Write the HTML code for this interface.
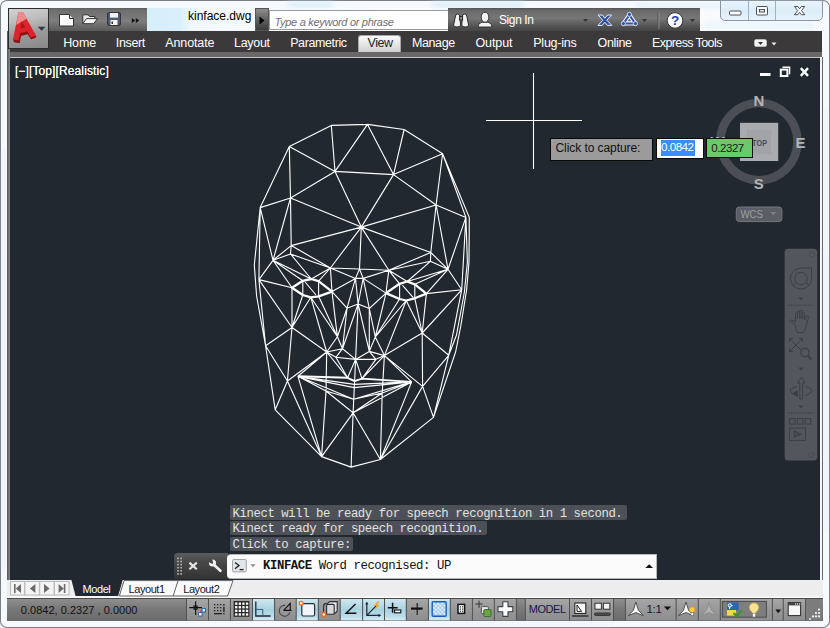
<!DOCTYPE html>
<html>
<head>
<meta charset="utf-8">
<title>kinface.dwg</title>
<style>
*{box-sizing:border-box;margin:0;padding:0}
html,body{width:830px;height:628px;overflow:hidden;background:#f4f8fc;font-family:"Liberation Sans",sans-serif;}
#win{position:absolute;left:0;top:0;width:830px;height:628px;background:#f6f9fd;overflow:hidden;border-radius:7px 7px 7px 7px;box-shadow:inset 0 0 0 1px #7c7f84}
.abs{position:absolute}
svg{position:absolute;overflow:visible}
/* title row */
#titlebg{left:8px;top:8px;width:814px;height:24px;background:linear-gradient(90deg,#f4f9fd 0,#d7eefb 139px,#d9effb 172px,#f1f8fd 184px,#f7fbfe 250px,#fff 620px,#f8fbfe 700px,#f6fafd 814px)}
.blot{position:absolute;background:#d3ebf9;filter:blur(2.5px);opacity:.8}
#qat{left:48px;top:8px;width:98.6px;height:22.6px;background:linear-gradient(#5e5e5e,#6e6e6e 10%,#7e7e7e 55%,#686868 82%,#5a5a5a);}
#appbtn{left:8px;top:8px;width:41px;height:41px;border:1px solid #2c2c2c;background:linear-gradient(170deg,#d2d2d2,#bdbdbd 30%,#9a9a9a 60%,#8a8a8a);}
#title{left:188px;top:9px;font-size:12px;color:#000;white-space:nowrap}
#searcharrow{left:255px;top:8px;width:14px;height:23px;background:linear-gradient(#8c8c8c,#6a6a6a 40%,#3c3c3c);border:1px solid #555}
#search{left:269px;top:10px;width:180px;height:20px;background:#fff;border:1px solid #9a9a9a;border-right:none;font-style:italic;font-size:11px;letter-spacing:-0.3px;color:#707070;padding:4.5px 0 0 4.5px;white-space:nowrap}
#info{left:448px;top:8px;width:252px;height:23px;background:linear-gradient(#555,#6a6a6a 12%,#767676 45%,#4e4e4e 85%,#444)}
#signin{left:499px;top:12.8px;font-size:12px;letter-spacing:-0.4px;color:#fff;white-space:nowrap}
#wctl{left:720px;top:0px;width:103px;height:21px;border:1px solid #8b97a3;border-radius:0 0 5px 5px;background:linear-gradient(#eaf4fc,#dcedf9 50%,#e6f2fb)}
#wctl i{position:absolute;top:0;width:1px;height:19px;background:#9fb0bf}
#tabs{left:8px;top:31px;width:814px;height:22px;background:#3b3939}
#strip{left:8px;top:52.3px;width:814px;height:6px;background:#696969;border-bottom:1px solid #c4c4c4}
.tab{position:absolute;top:36px;font-size:12.5px;color:#fff;white-space:nowrap}
#viewtab{left:357.5px;top:34.5px;width:43.5px;height:17.5px;background:linear-gradient(#fafafa,#e2e2e2 60%,#cfcfcf);border:1px solid #a8a8a8;border-bottom:none;border-radius:3px 3px 0 0}
/* drawing */
#frameL{left:7px;top:31px;width:3px;height:549px;background:linear-gradient(90deg,#555,#8a8a8a)}
#frameR{left:819.6px;top:57px;width:3.6px;height:523px;background:linear-gradient(90deg,#f6f6f6 0,#f6f6f6 72%,#6a6a6a 72%)}
#draw{left:10px;top:57.8px;width:809.6px;height:521.8px;background:#212830;overflow:hidden}
#vplabel{left:4.9px;top:6.2px;font-size:12px;letter-spacing:0.12px;color:#fff;white-space:nowrap;text-shadow:0 0 0.6px #fff}
/* bottom */
#laybar{left:7px;top:579.5px;width:815.6px;height:19px;background:#ededed;border-bottom:1px solid #4a4a4a;box-shadow:inset 0 -1.5px 0 #fcfcfc}
.ltab{z-index:3;top:582.6px;font-size:11px;color:#14142e;letter-spacing:-0.42px;white-space:nowrap}
#status{left:7px;top:598.5px;width:815.6px;height:22px;background:linear-gradient(#8e8e8e,#7a7a7a 40%,#6a6a6a)}
.cmdhist{position:absolute;left:220px;height:14.4px;background:#4d5157;color:#e2e2e2;font-family:"Liberation Mono",monospace;font-size:12.3px;letter-spacing:-0.42px;line-height:14.4px;padding:1.5px 0 0 2.6px;white-space:pre;border-radius:2px;overflow:hidden}
</style>
</head>
<body>
<div id="win">
  <div id="titlebg" class="abs"></div>
  <div class="blot" style="left:288px;top:2px;width:46px;height:5px"></div><div class="blot" style="left:432px;top:2px;width:92px;height:5px"></div><div class="blot" style="left:636px;top:3px;width:100px;height:5px;opacity:.5"></div><div class="blot" style="left:704px;top:22px;width:110px;height:8px;opacity:.35"></div>
  <div class="blot" style="left:825px;top:110px;width:3px;height:420px;opacity:.35"></div><div class="blot" style="left:2px;top:150px;width:3px;height:420px;opacity:.3"></div><div class="blot" style="left:380px;top:623px;width:230px;height:3px;opacity:.4"></div>
  <div id="tabs" class="abs"></div>
  <div id="strip" class="abs"></div>
  <div id="frameL" class="abs"></div>
  <div id="frameR" class="abs"></div>
  <div id="qat" class="abs"></div>
  <div id="appbtn" class="abs"></div>
  <div id="title" class="abs">kinface.dwg</div>
  <div id="searcharrow" class="abs"></div>
  <div id="search" class="abs">Type a keyword or phrase</div>
  <div id="info" class="abs"></div>
  <div id="signin" class="abs">Sign In</div>
  <div id="wctl" class="abs"><i style="left:27px"></i><i style="left:54px"></i></div>
  <div id="viewtab" class="abs"></div>
  <span class="tab" style="left:63.2px;letter-spacing:-0.14px">Home</span>
  <span class="tab" style="left:115.8px;letter-spacing:-0.36px">Insert</span>
  <span class="tab" style="left:165.3px;letter-spacing:-0.13px">Annotate</span>
  <span class="tab" style="left:234px;letter-spacing:-0.29px">Layout</span>
  <span class="tab" style="left:290.2px;letter-spacing:-0.4px">Parametric</span>
  <span class="tab" style="left:367.6px;letter-spacing:-0.44px;color:#1e1e1e">View</span>
  <span class="tab" style="left:412px;letter-spacing:-0.4px">Manage</span>
  <span class="tab" style="left:475.4px;letter-spacing:-0.07px">Output</span>
  <span class="tab" style="left:533.3px;letter-spacing:-0.26px">Plug-ins</span>
  <span class="tab" style="left:597.6px;letter-spacing:-0.36px">Online</span>
  <span class="tab" style="left:652px;letter-spacing:-0.6px">Express Tools</span>
  <svg id="topicons" width="830" height="58" viewBox="0 0 830 58" style="left:0;top:0">
    <!-- app logo A -->
    <g>
      <path d="M13 39.6 L14 42.2 L19.6 43.2 L21 36 L27.6 34.2 L31 39.6 L36.4 37.2 L36 35.5 L27 30 L19 32 Z" fill="#8c1216"/>
      <path d="M18.5 12 L22.8 12 L36 35.5 L30.5 37.5 L27.5 31.5 L20 33 L18.5 40.5 L13 39.5 Z" fill="#df232a"/>
      <path d="M18.5 12 L22.8 12 L26.6 18.8 L16.2 25 Z" fill="#f08a8c"/>
      <path d="M21.6 21.2 L25.6 27.6 L20.6 28.6 Z" fill="#a8181d"/>
      <path d="M37.8 26.7 H45.4 L41.6 30.7 Z" fill="#2f363f"/>
    </g>
    <!-- new -->
    <path d="M59.5 14.5 H69.5 L73.5 18.5 V26 H59.5 Z" fill="#fbfbfb" stroke="#333" stroke-width="1"/>
    <path d="M69.5 14.5 V18.5 H73.5" fill="#ddd" stroke="#333" stroke-width="1"/>
    <!-- open -->
    <path d="M82.8 23.5 V14.8 H88 L89.5 16.5 H94.8 V18.5" fill="#e8e8e8" stroke="#333" stroke-width="1"/>
    <path d="M82.8 23.7 L86.5 18.6 H97.6 L93.6 23.7 Z" fill="#f4f4f4" stroke="#333" stroke-width="1"/>
    <!-- save -->
    <rect x="107.6" y="12.6" width="12.8" height="12.8" rx="1.2" fill="#4d5a73" stroke="#2b2f3a" stroke-width="1"/>
    <rect x="110" y="13" width="8" height="4.6" fill="#f2f2f2"/>
    <rect x="110.5" y="20" width="7" height="5" fill="#f4f4f4"/>
    <rect x="111.5" y="21.5" width="1.5" height="2.5" fill="#333"/>
    <!-- >> -->
    <path d="M131.8 18 L135.2 20.5 L131.8 23 Z M135.8 18 L139.2 20.5 L135.8 23 Z" fill="#111"/>
    <!-- search arrow -->
    <path d="M259.5 16.5 L264.5 20.5 L259.5 24.5 Z" fill="#000"/>
    <!-- binoculars -->
    <g fill="#f2f2f2" stroke="#2a2a2a" stroke-width="1">
      <path d="M455.5 16 Q455.5 14 457.5 14 Q459.5 14 459.8 16 L460.6 25 Q460.5 27 457 27 Q453.6 27 453.6 25 Z"/>
      <path d="M462.4 16 Q462.6 14 464.6 14 Q466.6 14 466.8 16 L468.6 25 Q468.6 27 465.2 27 Q461.8 27 461.8 25 Z"/>
      <rect x="459.6" y="16.5" width="3" height="3.5" fill="#888"/>
    </g>
    <!-- person -->
    <g fill="#f4f4f4" stroke="#2a2a2a" stroke-width="0.9">
      <path d="M478 27 Q478 23 482 22.2 L488 22.2 Q492 23 492 27 Z"/>
      <ellipse cx="485" cy="17.2" rx="3.8" ry="5"/>
    </g>
    <!-- small arrows -->
    <path d="M583 19 H588 L585.5 22 Z" fill="#333"/>
    <path d="M642 19 H647 L644.5 22 Z" fill="#333"/>
    <path d="M690 19 H695 L692.5 22 Z" fill="#333"/>
    <rect x="657.5" y="12" width="1" height="17" fill="#555"/><rect x="658.5" y="12" width="1" height="17" fill="#888"/>
    <!-- X exchange -->
    <path d="M598 15 H602.4 L604.8 18.3 L607.6 15 H611.6 L606.8 20.2 L611.8 25.4 H607.4 L604.8 22.2 L602.2 25.4 H598 L602.8 20.2 Z" fill="#2d4fa3" stroke="#e8eefc" stroke-width="1" stroke-linejoin="round"/>
    <!-- A360 triangle -->
    <g fill="none" stroke="#eef1fa" stroke-width="4.2" stroke-linejoin="round" stroke-linecap="round">
      <path d="M629.4 15 L623.6 23.4 H635.2 Z"/>
    </g>
    <g fill="none" stroke="#3553a6" stroke-width="2" stroke-linejoin="round" stroke-linecap="round">
      <path d="M629.4 15 L623.6 23.4 H635.2 Z"/>
    </g>
    <g fill="#3553a6" stroke="#eef1fa" stroke-width="0.8"><circle cx="629.4" cy="14.4" r="2.1"/><circle cx="623.4" cy="23.6" r="2.1"/><circle cx="635.4" cy="23.6" r="2.1"/></g>
    <!-- help -->
    <circle cx="675" cy="20.4" r="7.8" fill="#fafafa" stroke="#333" stroke-width="1"/>
    <text x="675" y="25.2" font-family="Liberation Sans, sans-serif" font-weight="bold" font-size="13.5" fill="#1f3fb0" text-anchor="middle">?</text>
    <!-- window controls -->
    <rect x="729.5" y="11" width="11.5" height="4" rx="1" fill="#fff" stroke="#4a4f55" stroke-width="1"/>
    <rect x="756.5" y="6.5" width="11" height="8.5" rx="1" fill="#fff" stroke="#4a4f55" stroke-width="1"/>
    <rect x="759.5" y="9.5" width="5" height="2.5" fill="#dcebf7" stroke="#4a4f55" stroke-width="1"/>
    <path d="M794.5 6.5 H797.8 L799.6 8.8 L801.4 6.5 H804.7 L801.5 10.6 L804.8 14.7 H801.4 L799.6 12.4 L797.8 14.7 H794.4 L797.7 10.6 Z" fill="#fff" stroke="#4a4f55" stroke-width="1" stroke-linejoin="round"/>
    <!-- Express Tools extra icon -->
    <rect x="754.5" y="39.5" width="12" height="7" rx="1.5" fill="#f4f4f4" stroke="#ddd" stroke-width="0.5"/>
    <path d="M758 42 H763 L760.5 45 Z" fill="#333"/>
    <path d="M771.5 42.5 H776.5 L774 45.5 Z" fill="#f0f0f0"/>
  </svg>

  <div id="draw" class="abs">
    <div id="vplabel" class="abs">[−][Top][Realistic]</div>
    <svg id="scene" width="810" height="521" viewBox="10 58 810 521" style="left:0;top:0.2px">
      <!-- viewport controls -->
      <rect x="760" y="73" width="10.5" height="3" fill="#fff"/>
      <path d="M782.5 67.2 H789.6 V74.2" fill="none" stroke="#fff" stroke-width="1.4"/>
      <rect x="780.8" y="69.6" width="6.6" height="6.4" fill="none" stroke="#fff" stroke-width="2"/>
      <path d="M800.8 68.2 L808 75.8 M808 68.2 L800.8 75.8" stroke="#fff" stroke-width="2.4"/>
      <!-- compass -->
      <circle cx="758.9" cy="141.6" r="38.6" fill="none" stroke="#4b4f55" stroke-width="8.6"/>
      <rect x="740" y="122.8" width="38.2" height="38.2" fill="#a9abae"/>
      <rect x="747" y="129.8" width="24.2" height="24.4" fill="#a1a3a7"/>
      <g font-family="Liberation Sans, sans-serif" font-weight="bold" text-anchor="middle">
        <text x="759.6" y="145.6" font-size="9.5" fill="#4a4d52" textLength="15" lengthAdjust="spacingAndGlyphs">TOP</text>
        <g font-size="15" fill="#b2b4b8">
          <text x="759" y="106.2">N</text>
          <text x="800.4" y="148.2">E</text>
          <text x="758.8" y="188.8">S</text>
          <text x="717.5" y="147.2">W</text>
        </g>
      </g>
      <!-- WCS -->
      <rect x="736.3" y="207" width="45.6" height="14.6" rx="3" fill="#5b5e64" stroke="#74777c" stroke-width="1"/>
      <text x="740.4" y="218.3" font-family="Liberation Sans, sans-serif" font-size="11" fill="#9c9fa4" textLength="22.5" lengthAdjust="spacingAndGlyphs">WCS</text>
      <path d="M770 212 H776.4 L773.2 215.6 Z" fill="#7b7e84"/>
      <!-- nav bar -->
      <rect x="784.6" y="248.8" width="32.6" height="211.6" rx="3.5" fill="#53575d"/>
      <g fill="none" stroke="#3c4046" stroke-width="1">
        <circle cx="812" cy="254.5" r="2.6" stroke-dasharray="1 1"/>
        <path d="M790.5 278.5 A10.5 10.5 0 0 1 801 268 H811.5 V278.5 A10.5 10.5 0 0 1 790.5 278.5 Z"/>
        <circle cx="801" cy="278.5" r="6.2"/>
        <path d="M796 282.5 L793 286 M806 282.5 L809 286"/>
        <path d="M788 305.2 H814" stroke-dasharray="1.5 1"/>
        <path d="M795.5 325 L790.5 321.5 Q789.5 320 791.5 320 L795.5 322 V313.5 Q796.5 312 797.5 313.5 V319 V311.5 Q798.7 310 799.8 311.5 V319 V310.8 Q801 309.5 802.2 310.8 V319 V312.5 Q803.4 311.3 804.5 312.5 V320 L806.5 316 Q808 315 808.5 316.5 L806.5 325 Q805.5 331 803 332.5 H797.5 Q795.5 329 795.5 325 Z"/>
        <path d="M789.5 338.5 L802.5 351.5 M802.5 338.5 L789.5 351.5 M789.5 342 V338.5 H793 M799 338.5 H802.5 V342 M789.5 348 V351.5 H793"/>
        <circle cx="805" cy="352.6" r="4.2" stroke-width="1.2"/>
        <path d="M808 355.8 L811.5 359.5" stroke-width="2"/>
        <path d="M799.8 399 V383 H797.5 L801.2 377 L805 383 H802.6 V399 Z"/>
        <path d="M797 386.5 Q789.5 388 790.5 391.5 Q792 394.5 797.5 395.5 M805 386.5 Q812.5 388 811.5 391.5 Q810 394.5 805 395.5"/>
        <path d="M797.5 391 L793 393.5 L797.5 396.8 Z" fill="#3c4046"/>
        <path d="M788 413 H814" stroke-dasharray="1.5 1"/>
        <rect x="789.5" y="418.5" width="5.6" height="5.6"/><rect x="797.3" y="418.5" width="5.6" height="5.6"/><rect x="805.1" y="418.5" width="5.6" height="5.6"/>
        <rect x="789.5" y="428" width="16" height="12.4"/>
        <path d="M794 430.8 L801.5 434.2 L794 437.6 Z" fill="#45494f"/>
        <circle cx="811.5" cy="455" r="2.6" stroke-dasharray="1 1"/>
      </g>
      <g fill="#3c4046">
        <path d="M798.3 297.5 H803.7 L801 300.5 Z"/>
        <path d="M798.3 367.5 H803.7 L801 370.5 Z"/>
        <path d="M798.3 405.5 H803.7 L801 408.5 Z"/>
      </g>
      <!-- crosshair -->
      <path d="M533.5 73 V169 M486 120.5 H582" stroke="#fff" stroke-width="1.1" fill="none"/>
      <!-- FACE -->
      <g id="face">
<path d="M331.3 125.4L367.5 124.4M367.5 124.4L404.1 129.5M289.3 146.5L331.3 125.4M404.1 129.5L442.6 153.8M289.3 146.5L260.2 207.6M442.6 153.8L465.9 217.4M442.6 153.8L469.3 217.4M331.3 125.4L335.0 171.4M367.5 124.4L335.0 171.4M367.5 124.4L393.5 174.6M404.1 129.5L393.5 174.6M335.0 171.4L393.5 174.6M289.3 146.5L335.0 171.4M442.6 153.8L393.5 174.6M289.3 146.5L290.5 198.0M290.5 198.0L335.0 171.4M442.6 153.8L436.1 205.0M436.1 205.0L393.5 174.6M290.5 198.0L260.2 207.6M436.1 205.0L465.9 217.4M335.0 171.4L361.3 227.1M393.5 174.6L361.3 227.1M290.5 198.0L361.3 227.1M436.1 205.0L361.3 227.1M290.5 198.0L291.2 245.6M290.5 198.0L273.0 260.3M260.2 207.6L273.0 260.3M291.2 245.6L361.3 227.1M291.2 245.6L330.4 268.0M290.5 254.0L330.4 268.0M291.2 245.6L273.0 260.3M290.5 254.0L273.0 260.3M291.2 245.6L290.5 254.0M361.3 227.1L330.4 268.0M361.3 227.1L359.5 269.0M361.3 227.1L388.8 270.3M361.3 227.1L430.8 252.5M436.1 205.0L430.8 252.5M436.1 205.0L448.0 269.3M465.9 217.4L448.0 269.3M430.8 252.5L388.8 270.3M430.4 261.3L388.8 270.3M430.8 252.5L430.4 261.3M430.8 252.5L448.0 269.3M430.4 261.3L448.0 269.3M330.4 268.0L359.5 269.0M359.5 269.0L388.8 270.3M359.5 269.0L355.5 278.4M359.5 269.0L363.2 278.4M355.5 278.4L363.2 278.4M330.4 268.0L355.5 278.4M388.8 270.3L363.2 278.4M330.4 268.0L332.0 291.6M388.8 270.3L386.0 293.1M332.0 291.6L355.5 278.4M386.0 293.1L363.2 278.4M290.5 254.0L311.3 279.0M273.0 260.3L311.3 279.0M273.0 260.3L302.8 280.8M273.0 260.3L292.0 287.8M330.4 268.0L311.3 279.0M330.4 268.0L318.6 281.2M273.0 260.3L258.9 279.6M258.9 279.6L292.0 287.8M430.4 261.3L407.2 281.5M388.8 270.3L407.2 281.5M388.8 270.3L399.6 283.8M448.0 269.3L407.2 281.5M448.0 269.3L414.8 284.3M448.0 269.3L426.4 293.6M448.0 269.3L461.7 289.8M426.4 293.6L461.7 289.8M292.0 287.8L292.0 327.5M258.9 279.6L292.0 327.5M302.8 295.0L292.0 327.5M310.8 297.3L292.0 327.5M310.8 297.3L326.7 352.0M310.8 297.3L337.4 336.8M318.6 296.3L337.4 336.8M332.0 291.6L337.4 336.8M332.0 291.6L347.0 308.2M355.5 278.4L347.0 308.2M363.2 278.4L369.3 308.5M386.0 293.1L369.3 308.5M386.0 293.1L375.3 337.0M399.6 299.0L375.3 337.0M406.2 300.5L375.3 337.0M406.2 300.5L384.4 355.6M406.2 300.5L422.2 333.0M414.8 298.3L422.2 333.0M426.4 293.6L422.2 333.0M461.7 289.8L422.2 333.0M358.1 303.9L347.0 308.2M358.1 303.9L369.3 308.5M358.1 303.9L355.6 359.4M358.1 303.9L342.5 348.7M358.1 303.9L369.3 351.4M347.0 308.2L337.4 336.8M347.0 308.2L342.5 348.7M369.3 308.5L375.3 337.0M369.3 308.5L369.3 351.4M337.4 336.8L342.5 348.7M375.3 337.0L369.3 351.4M337.4 336.8L326.7 352.0M375.3 337.0L384.4 355.6M342.5 348.7L326.7 352.0M369.3 351.4L384.4 355.6M342.5 348.7L355.6 359.4M369.3 351.4L355.6 359.4M342.5 348.7L335.9 357.3M335.9 357.3L326.7 352.0M355.6 359.4L375.9 359.3M369.3 351.4L375.9 359.3M384.4 355.6L375.9 359.3M355.5 278.4L358.1 303.9M363.2 278.4L358.1 303.9M335.9 357.3L355.6 359.4M326.7 352.0L298.0 376.3M326.7 352.0L287.4 381.0M326.7 352.0L326.0 391.0M326.7 352.0L347.6 377.8M335.9 357.3L347.6 377.8M355.6 359.4L347.6 377.8M355.6 359.4L362.0 378.6M384.4 355.6L362.0 378.6M375.9 359.3L362.0 378.6M384.4 355.6L411.6 381.9M384.4 355.6L422.6 386.4M384.4 355.6L382.2 393.0M292.0 327.5L287.4 381.0M265.6 345.8L287.4 381.0M287.4 381.0L275.2 409.8M287.4 381.0L321.6 456.6M298.0 376.3L321.6 456.6M292.0 327.5L265.6 345.8M292.0 327.5L326.7 352.0M422.2 333.0L448.7 355.3M422.2 333.0L384.4 355.6M422.2 333.0L422.6 386.4M422.6 386.4L448.7 355.3M422.6 386.4L433.5 417.4M422.6 386.4L380.4 459.5M411.6 381.9L380.4 459.5M382.2 393.0L380.4 459.5M353.1 412.8L380.4 459.5M353.1 412.8L351.1 467.1M353.1 412.8L321.6 456.6M326.0 391.0L321.6 456.6M326.0 391.0L353.1 412.8M382.2 393.0L353.1 412.8M353.1 412.8L411.6 381.9M321.6 456.6L351.1 467.1M351.1 467.1L380.4 459.5M260.2 207.6L258.9 279.6M258.9 279.6L265.6 345.8M265.6 345.8L275.2 409.8M275.2 409.8L321.6 456.6M380.4 459.5L433.5 417.4M433.5 417.4L448.7 355.3M448.7 355.3L461.7 289.8M461.7 289.8L465.9 217.4M260.2 207.6L254.3 265.0M254.3 265.0L256.6 296.0M256.6 296.0L265.6 345.8M469.3 217.4L469.0 262.0M469.0 262.0L466.6 290.0M466.6 290.0L460.8 326.0M460.8 326.0L455.6 352.0M455.6 352.0L433.5 417.4M465.9 217.4L467.4 262.0M467.4 262.0L464.4 292.0M464.4 292.0L456.5 335.0M456.5 335.0L448.7 355.3M298.0 376.3L326.0 391.0M326.0 391.0L353.6 399.3M353.6 399.3L382.2 393.0M382.2 393.0L411.6 381.9M298.0 376.3L353.6 399.3M353.6 399.3L411.6 381.9M355.6 359.4L354.6 381.2M354.6 381.2L353.1 412.8M302.8 280.8L302.8 295.0M318.6 281.2L318.6 296.3M399.6 283.8L399.6 299.0M414.8 284.3L414.8 298.3M305.5 282.5L315.6 294.5M402.8 285.6L413 297.4" fill="none" stroke="#fff" stroke-width="1.12" stroke-linecap="round"/>
<path d="M292.0 287.8 L302.8 280.8 L311.3 279.0 L318.6 281.2 L332.0 291.6 L318.6 296.3 L310.8 297.3 L302.8 295.0Z M386.0 293.1 L399.6 283.8 L407.2 281.5 L414.8 284.3 L426.4 293.6 L414.8 298.3 L406.2 300.5 L399.6 299.0Z" fill="none" stroke="#fff" stroke-width="2.3" stroke-linecap="round" stroke-linejoin="round"/>
<path d="M298.0 376.3 L347.6 377.8 L354.6 381.2 L362.0 378.6 L411.6 381.9" fill="none" stroke="#fff" stroke-width="1.9" stroke-linejoin="round"/><path d="M298.0 376.3 L354.4 384.4 L411.6 381.9 M298.0 376.3 L354.2 387.6 L411.6 381.9" fill="none" stroke="#fff" stroke-width="1.2"/>
</g>
    </svg>
    <div class="abs" id="tip" style="left:540px;top:80px;width:103px;height:23px;background:#9b9b9b;border:1px solid #0a0a0a;font-size:12px;letter-spacing:-0.07px;color:#111;padding:2.6px 0 0 4.5px;white-space:nowrap">Click to capture:</div>
    <div class="abs" id="in1" style="left:646px;top:79.9px;width:47.5px;height:21px;background:#fff;border:1px solid #0a0a0a"><span style="position:absolute;left:4px;top:1.5px;width:33.5px;height:15.5px;background:#3a8dfd;color:#fff;font-size:11.5px;letter-spacing:-0.45px;line-height:15.5px;white-space:nowrap">0.0842</span></div>
    <div class="abs" id="in2" style="left:696px;top:79.9px;width:47px;height:20.5px;background:#6bc96a;border:1px solid #0a0a0a;font-size:11.5px;letter-spacing:-0.45px;color:#1a1a1a;padding:3px 0 0 4.3px;white-space:nowrap">0.2327</div>
    <div class="cmdhist" style="top:447.4px;width:396.5px">Kinect will be ready for speech recognition in 1 second.</div>
    <div class="cmdhist" style="top:463.1px;width:256.5px">Kinect ready for speech recognition.</div>
    <div class="cmdhist" style="top:478.8px;width:123px">Click to capture:</div>
  <div class="abs" id="cmdgrip" style="left:163.5px;top:495px;width:54px;height:26px;background:linear-gradient(#5c5c5c,#484848 35%,#333 100%);border-radius:4px 0 0 2px"></div>
    <div class="abs" id="cmdin" style="left:217px;top:496px;width:430px;height:25.5px;background:#fbfbfb;border:1px solid #b8b8b8;border-left:none;border-radius:4px 0 0 4px;font-family:'Liberation Mono',monospace;font-size:12.3px;letter-spacing:-0.42px;color:#111;white-space:pre;line-height:23.5px;padding-left:36px"><b>KINFACE</b> Word recognised: UP</div>
    <svg width="490" height="28" viewBox="173 553 490 28" style="left:163px;top:495px">
      <g fill="#b9b9b9">
        <rect x="177.2" y="557.6" width="1.6" height="1.6"/><rect x="180.3" y="557.6" width="1.6" height="1.6"/>
        <rect x="177.2" y="560.7" width="1.6" height="1.6"/><rect x="180.3" y="560.7" width="1.6" height="1.6"/>
        <rect x="177.2" y="563.8" width="1.6" height="1.6"/><rect x="180.3" y="563.8" width="1.6" height="1.6"/>
        <rect x="177.2" y="566.9" width="1.6" height="1.6"/><rect x="180.3" y="566.9" width="1.6" height="1.6"/>
        <rect x="177.2" y="570" width="1.6" height="1.6"/><rect x="180.3" y="570" width="1.6" height="1.6"/>
        <rect x="177.2" y="573.1" width="1.6" height="1.6"/><rect x="180.3" y="573.1" width="1.6" height="1.6"/>
      </g>
      <path d="M189.4 562.6 L196.8 569.2 M196.8 562.6 L189.4 569.2" stroke="#e6e6e6" stroke-width="2.2" fill="none"/>
      <path d="M220.4 570.8 L213.6 564.6" stroke="#f4f4f4" stroke-width="2.7" stroke-linecap="round" fill="none"/>
      <circle cx="212.5" cy="562.9" r="3.5" fill="#f4f4f4"/>
      <path d="M212.3 562.9 L208.2 561 L211.2 558.2 Z" fill="#4c4c4c" stroke="#4c4c4c" stroke-width="1.6" stroke-linejoin="round"/>
      <rect x="232.5" y="559.5" width="13.8" height="12.4" rx="1.2" fill="#e2e5ea" stroke="#9ea3aa" stroke-width="1"/>
      <path d="M235 562.5 L239 565.6 L235 568.7" stroke="#222" stroke-width="1.3" fill="none"/>
      <path d="M239.6 569.6 H243.6" stroke="#222" stroke-width="1.3"/>
      <path d="M250.4 564.2 H255.6 L253 567.2 Z" fill="#8b8b8b"/>
      <path d="M645.4 568 H653 L649.2 564.2 Z" fill="#111"/>
    </svg>
  </div>

  <div id="laybar" class="abs"></div>
  <div id="status" class="abs"></div>
  <div class="abs" id="coords" style="left:20.8px;top:604.4px;font-size:11px;color:#111;white-space:pre;letter-spacing:0.02px">0.0842, 0.2327 , 0.0000</div>
  <span class="abs ltab" style="left:82.5px;color:#fff">Model</span>
  <span class="abs ltab" style="left:128.5px">Layout1</span>
  <span class="abs ltab" style="left:183.2px">Layout2</span>
  <span class="abs" style="z-index:3;left:528.7px;top:603.4px;font-size:11px;letter-spacing:-0.42px;color:#16164a;white-space:nowrap">MODEL</span>
  <span class="abs" style="z-index:3;left:646.4px;top:603px;font-size:11.5px;letter-spacing:-0.3px;color:#1c1038;white-space:nowrap">1:1</span>
  <svg id="boticons" width="830" height="50" viewBox="0 578 830 50" style="left:0;top:578px">
<!-- status buttons -->
<defs><linearGradient id="boff" x1="0" y1="0" x2="0" y2="1"><stop offset="0" stop-color="#a6a6a6"/><stop offset="0.45" stop-color="#999"/><stop offset="1" stop-color="#8e8e8e"/></linearGradient><linearGradient id="bon" x1="0" y1="0" x2="0" y2="1"><stop offset="0" stop-color="#cfe7f0"/><stop offset="0.5" stop-color="#a9d2e1"/><stop offset="0.8" stop-color="#b9dce8"/><stop offset="1" stop-color="#d6ecf3"/></linearGradient></defs>
<rect x="186.5" y="599" width="22.0" height="21.4" fill="url(#boff)"/><rect x="186.0" y="599" width="1" height="21.4" fill="#505050"/>
<rect x="208.5" y="599" width="21.9" height="21.4" fill="url(#boff)"/><rect x="208.0" y="599" width="1" height="21.4" fill="#505050"/>
<rect x="230.4" y="599" width="22.1" height="21.4" fill="url(#boff)"/><rect x="229.9" y="599" width="1" height="21.4" fill="#505050"/>
<rect x="252.5" y="599" width="22.1" height="21.4" fill="url(#bon)"/><rect x="252.0" y="599" width="1" height="21.4" fill="#505050"/>
<rect x="274.6" y="599" width="21.6" height="21.4" fill="url(#boff)"/><rect x="274.1" y="599" width="1" height="21.4" fill="#505050"/>
<rect x="296.2" y="599" width="22.1" height="21.4" fill="url(#bon)"/><rect x="295.7" y="599" width="1" height="21.4" fill="#505050"/>
<rect x="318.3" y="599" width="21.9" height="21.4" fill="url(#boff)"/><rect x="317.8" y="599" width="1" height="21.4" fill="#505050"/>
<rect x="340.2" y="599" width="22.4" height="21.4" fill="url(#bon)"/><rect x="339.7" y="599" width="1" height="21.4" fill="#505050"/>
<rect x="362.6" y="599" width="21.9" height="21.4" fill="url(#bon)"/><rect x="362.1" y="599" width="1" height="21.4" fill="#505050"/>
<rect x="384.5" y="599" width="21.8" height="21.4" fill="url(#bon)"/><rect x="384.0" y="599" width="1" height="21.4" fill="#505050"/>
<rect x="406.3" y="599" width="22.1" height="21.4" fill="url(#boff)"/><rect x="405.8" y="599" width="1" height="21.4" fill="#505050"/>
<rect x="428.4" y="599" width="21.9" height="21.4" fill="url(#bon)"/><rect x="427.9" y="599" width="1" height="21.4" fill="#505050"/>
<rect x="450.3" y="599" width="22.1" height="21.4" fill="url(#boff)"/><rect x="449.8" y="599" width="1" height="21.4" fill="#505050"/>
<rect x="472.4" y="599" width="21.9" height="21.4" fill="url(#boff)"/><rect x="471.9" y="599" width="1" height="21.4" fill="#505050"/>
<rect x="494.3" y="599" width="22.1" height="21.4" fill="url(#boff)"/><rect x="493.8" y="599" width="1" height="21.4" fill="#505050"/>
<rect x="515.9" y="599" width="1" height="21.4" fill="#505050"/>
<rect x="525.3" y="599" width="44.2" height="21.4" fill="url(#boff)"/><rect x="524.8" y="599" width="1" height="21.4" fill="#505050"/>
<rect x="569.5" y="599" width="22.0" height="21.4" fill="url(#boff)"/><rect x="569.0" y="599" width="1" height="21.4" fill="#505050"/>
<rect x="591.5" y="599" width="22.0" height="21.4" fill="url(#boff)"/><rect x="591.0" y="599" width="1" height="21.4" fill="#505050"/>
<rect x="613" y="599" width="1" height="21.4" fill="#505050"/>
<rect x="625.4" y="599" width="50.7" height="21.4" fill="url(#boff)"/><rect x="624.9" y="599" width="1" height="21.4" fill="#505050"/>
<rect x="676.1" y="599" width="22.2" height="21.4" fill="url(#boff)"/><rect x="675.6" y="599" width="1" height="21.4" fill="#505050"/>
<rect x="698.3" y="599" width="22.0" height="21.4" fill="url(#boff)"/><rect x="697.8" y="599" width="1" height="21.4" fill="#505050"/>
<rect x="720.3" y="599" width="52.1" height="21.4" fill="url(#boff)"/><rect x="719.8" y="599" width="1" height="21.4" fill="#505050"/>
<rect x="772.4" y="599" width="10.8" height="21.4" fill="url(#boff)"/><rect x="771.9" y="599" width="1" height="21.4" fill="#505050"/>
<rect x="783.2" y="599" width="22.3" height="21.4" fill="url(#boff)"/><rect x="782.7" y="599" width="1" height="21.4" fill="#505050"/>
<rect x="805" y="599" width="1" height="21.4" fill="#505050"/>
<rect x="805.9" y="599" width="16.4" height="21.4" fill="#7c7c7c"/>
<rect x="722.4" y="601.4" width="44" height="15.8" fill="#7e7e7e" stroke="#4a4a4a" stroke-width="1"/>
<!-- 1 infer -->
<path d="M189.2 607.6 H202 M195.6 601.2 V615" stroke="#111" stroke-width="1.2" fill="none"/>
<rect x="194" y="606" width="3.2" height="3.2" fill="none" stroke="#111" stroke-width="1"/>
<path d="M200.5 613 V610.5 H203" stroke="#c8501e" stroke-width="1" fill="none"/>
<rect x="202" y="608.6" width="3.4" height="3.4" fill="#fff" stroke="#2a5fc0" stroke-width="1.1"/>
<rect x="198.6" y="612.6" width="3.4" height="3.4" fill="#fff" stroke="#2a5fc0" stroke-width="0.9"/>
<!-- 2 snap -->
<g fill="#222"><rect x="214" y="604" width="1.3" height="1.3"/><rect x="217" y="604" width="1.3" height="1.3"/><rect x="220" y="604" width="1.3" height="1.3"/>
<rect x="214" y="607" width="1.3" height="1.3"/><rect x="217" y="607" width="1.3" height="1.3"/><rect x="220" y="607" width="1.3" height="1.3"/>
<rect x="214" y="610" width="1.3" height="1.3"/><rect x="217" y="610" width="1.3" height="1.3"/><rect x="220" y="610" width="1.3" height="1.3"/>
<rect x="223.2" y="604" width="1.4" height="1.6"/><rect x="223.2" y="606.8" width="1.4" height="5.2"/><rect x="214" y="613" width="8" height="1.3"/><rect x="223.2" y="613" width="1.4" height="1.3"/></g>
<!-- 3 grid -->
<rect x="233.6" y="601" width="15.8" height="15.8" fill="#2b2b2b"/>
<g fill="#fff"><rect x="235.1" y="602.5" width="2.3" height="2.3"/><rect x="235.1" y="606.1" width="2.3" height="2.3"/><rect x="235.1" y="609.7" width="2.3" height="2.3"/><rect x="235.1" y="613.3" width="2.3" height="2.3"/><rect x="238.7" y="602.5" width="2.3" height="2.3"/><rect x="238.7" y="606.1" width="2.3" height="2.3"/><rect x="238.7" y="609.7" width="2.3" height="2.3"/><rect x="238.7" y="613.3" width="2.3" height="2.3"/><rect x="242.3" y="602.5" width="2.3" height="2.3"/><rect x="242.3" y="606.1" width="2.3" height="2.3"/><rect x="242.3" y="609.7" width="2.3" height="2.3"/><rect x="242.3" y="613.3" width="2.3" height="2.3"/><rect x="245.9" y="602.5" width="2.3" height="2.3"/><rect x="245.9" y="606.1" width="2.3" height="2.3"/><rect x="245.9" y="609.7" width="2.3" height="2.3"/><rect x="245.9" y="613.3" width="2.3" height="2.3"/></g>
<!-- 4 ortho -->
<path d="M255.8 601.4 V616 H270.6" stroke="#1e2a36" stroke-width="1.3" fill="none"/>
<path d="M255.8 609.4 H262.8 V616" stroke="#2f5d7c" stroke-width="1" fill="none"/>
<!-- 5 polar -->
<path d="M285.2 605.4 A5.4 5.4 0 1 0 289.8 612.4" stroke="#444" stroke-width="1.2" fill="none"/>
<path d="M283.6 610.4 H291.6 M283.6 610.4 L290.2 603.4 V610.4" stroke="#111" stroke-width="1.2" fill="none"/>
<!-- 6 osnap -->
<rect x="301.8" y="603.6" width="12.8" height="12.4" rx="1.5" fill="#f0f3f8" stroke="#2a2f36" stroke-width="1.2"/>
<circle cx="301.2" cy="603.2" r="1.9" fill="#fff" stroke="#f06a1e" stroke-width="1.3"/>
<!-- 7 3dosnap -->
<path d="M326.6 604.4 L329.6 601.6 H337.2 V611.2 L334.2 614.2" fill="#e0e2e6" stroke="#2a2f36" stroke-width="1.1"/>
<rect x="326.6" y="604.4" width="7.6" height="9.8" rx="1" fill="#d6d8dc" stroke="#2a2f36" stroke-width="1.1"/>
<path d="M323.6 612 V606 Q323.6 603.4 326.6 603.4" fill="none" stroke="#2a2f36" stroke-width="1.1"/>
<circle cx="323.8" cy="614.6" r="2" fill="#fff" stroke="#f06a1e" stroke-width="1.5"/>
<!-- 8 otrack -->
<path d="M355.6 604 L346 613.3 H356.4" stroke="#111" stroke-width="1.4" fill="none"/>
<!-- 9 ducs -->
<path d="M366.8 602.4 V615.4 H380.4 M366.8 615.4 L376.4 605.6" stroke="#1e2a36" stroke-width="1.2" fill="none"/>
<path d="M365.2 604.4 L366.8 601.8 L368.4 604.4 Z M378.4 613.8 L381 615.4 L378.4 617 Z" fill="#1e2a36"/>
<path d="M377.6 601.6 L373.8 606 H376.4 L374.6 610.2 L379.6 604.8 H377 L379.4 601.6 Z" fill="#f5a21e"/>
<!-- 10 dyn -->
<path d="M387.8 607.8 H397.6 M392.6 602.8 V612.8" stroke="#111" stroke-width="1.5" fill="none"/>
<rect x="394.6" y="610" width="6.2" height="2.8" fill="#fff" stroke="#111" stroke-width="1.1"/>
<!-- 11 lwt -->
<path d="M411 608.6 H422.6" stroke="#111" stroke-width="2.2"/><path d="M417.2 603 V615" stroke="#111" stroke-width="1.1"/>
<!-- 12 tpy -->
<rect x="432.2" y="601.8" width="14" height="14.4" rx="1" fill="#a4cdea" stroke="#1c62b8" stroke-width="1.4"/>
<g fill="#d9ecf8"><rect x="433.2" y="602.8" width="2" height="2"/><rect x="433.2" y="606.8" width="2" height="2"/><rect x="433.2" y="610.8" width="2" height="2"/><rect x="435.2" y="604.8" width="2" height="2"/><rect x="435.2" y="608.8" width="2" height="2"/><rect x="435.2" y="612.8" width="2" height="2"/><rect x="437.2" y="602.8" width="2" height="2"/><rect x="437.2" y="606.8" width="2" height="2"/><rect x="437.2" y="610.8" width="2" height="2"/><rect x="439.2" y="604.8" width="2" height="2"/><rect x="439.2" y="608.8" width="2" height="2"/><rect x="439.2" y="612.8" width="2" height="2"/><rect x="441.2" y="602.8" width="2" height="2"/><rect x="441.2" y="606.8" width="2" height="2"/><rect x="441.2" y="610.8" width="2" height="2"/><rect x="443.2" y="604.8" width="2" height="2"/><rect x="443.2" y="608.8" width="2" height="2"/><rect x="443.2" y="612.8" width="2" height="2"/></g>
<!-- 13 qp -->
<rect x="458" y="604.4" width="6.6" height="9" fill="#fff" stroke="#111" stroke-width="1.5"/>
<g fill="#333"><rect x="459.8" y="606.3" width="1.2" height="1.2"/><rect x="462" y="606.3" width="1.2" height="1.2"/><rect x="459.8" y="608.5" width="1.2" height="1.2"/><rect x="462" y="608.5" width="1.2" height="1.2"/><rect x="459.8" y="610.7" width="1.2" height="1.2"/><rect x="462" y="610.7" width="1.2" height="1.2"/></g>
<!-- 14 sc -->
<path d="M475.4 604 H482.6 M479 600.6 V607.8" stroke="#2a3a2a" stroke-width="1" fill="none"/>
<rect x="481.4" y="606.6" width="7" height="7" rx="1" fill="#e8e8e8" stroke="#444" stroke-width="0.9"/>
<rect x="483.8" y="609.6" width="7.2" height="7" rx="1" fill="#6aa744" stroke="#3d6b22" stroke-width="1"/>
<!-- 15 am -->
<path d="M502.8 601.8 H508 V606.6 H512.8 V611.8 H508 V616.4 H502.8 V611.8 H498 V606.6 H502.8 Z" fill="#fafafa" stroke="#3a3f48" stroke-width="1.1" stroke-linejoin="round"/>
<!-- layout icon -->
<rect x="574.8" y="603" width="11" height="10.4" fill="#fafafa" stroke="#222" stroke-width="1.1"/>
<path d="M577 605 V611.4 H581.6 Z" fill="none" stroke="#222" stroke-width="1"/>
<path d="M572 616 H588.4" stroke="#222" stroke-width="1.3"/>
<!-- qv -->
<rect x="595" y="603.2" width="6.4" height="6" fill="#f4f4f4" stroke="#333" stroke-width="1"/>
<rect x="603.4" y="603.2" width="6.4" height="6" fill="#f4f4f4" stroke="#333" stroke-width="1"/>
<rect x="594.4" y="613" width="16" height="2.4" rx="1.2" fill="#555" stroke="#222" stroke-width="0.8"/>
<!-- anno scale -->
<path d="M635.9 602 L638.4 610.2 L643.4 615.6 L635.9 612.6 L628.4 615.6 L633.4 610.2 Z" fill="#fbfbfb" stroke="#444" stroke-width="0.9" stroke-linejoin="round"/>
<path d="M663.8 606.4 H671.2 L667.5 610.2 Z" fill="#111"/>
<!-- anno vis -->
<path d="M686 602 L688.5 610.2 L693.5 615.6 L686 612.6 L678.5 615.6 L683.5 610.2 Z" fill="#fbfbfb" stroke="#444" stroke-width="0.9" stroke-linejoin="round"/>
<circle cx="692.2" cy="609.8" r="2.8" fill="#ffd23c" stroke="#f09a1e" stroke-width="0.9"/><rect x="691" y="612.4" width="2.4" height="3.2" fill="#fafafa" stroke="#666" stroke-width="0.6"/>
<!-- anno grey -->
<path d="M709 602 L711.5 610.2 L716.5 615.6 L709 612.6 L701.5 615.6 L706.5 610.2 Z" fill="#b4b4b4" stroke="#8a8a8a" stroke-width="0.9" stroke-linejoin="round"/>
<path d="M705.5 604 L709.5 607" stroke="#9a9a9a" stroke-width="1.6"/>
<!-- lock ui -->
<rect x="727" y="602.4" width="11.6" height="8" fill="#2f66b4"/>
<rect x="727" y="610" width="9" height="5.6" fill="#f4d64a"/>
<path d="M729.6 609 V605.6 H732.6" fill="none" stroke="#fff" stroke-width="1"/><circle cx="729.8" cy="605.4" r="1.7" fill="#5b8fd6" stroke="#fff" stroke-width="0.9"/>
<path d="M733.6 613 L736.6 616 L741.8 610.4" stroke="#2c9a22" stroke-width="2" fill="none"/>
<!-- bulb -->
<circle cx="754" cy="607.6" r="4.7" fill="#f7e391" stroke="#caa94a" stroke-width="0.8"/>
<path d="M751.6 611 H756.4 L755.4 613.4 H752.6 Z" fill="#f7e391"/>
<rect x="752.6" y="613.2" width="2.8" height="3.8" fill="#fafafa" stroke="#777" stroke-width="0.6"/>
<!-- arrow -->
<path d="M775.4 609.6 H781 L778.2 613.2 Z" fill="#111"/>
<!-- clean screen -->
<rect x="788.2" y="602.6" width="12.4" height="13" fill="#f8f8f8" stroke="#333" stroke-width="1.1"/>
<rect x="788.2" y="602.6" width="12.4" height="2.8" fill="#444"/>
<g fill="#eee"><rect x="795" y="603.4" width="1.2" height="1.2"/><rect x="797" y="603.4" width="1.2" height="1.2"/><rect x="799" y="603.4" width="1.2" height="1.2"/></g>
<!-- grip -->
<g fill="#f4f4f4"><circle cx="819" cy="609.6" r="1.1"/><circle cx="816" cy="613" r="1.1"/><circle cx="819" cy="613" r="1.1"/><circle cx="813" cy="616.4" r="1.1"/><circle cx="816" cy="616.4" r="1.1"/><circle cx="819" cy="616.4" r="1.1"/><circle cx="810" cy="619" r="0.9"/></g>
    <!-- layout bar nav buttons -->
    <g fill="#f4f4f4" stroke="#b9b9b9" stroke-width="1">
      <rect x="10.5" y="581.5" width="14" height="13.5"/><rect x="24.9" y="581.5" width="14.4" height="13.5"/><rect x="39.7" y="581.5" width="14.4" height="13.5"/><rect x="54.5" y="581.5" width="14.6" height="13.5"/>
    </g>
    <g fill="#6b6b6b">
      <rect x="14" y="584" width="1.6" height="9"/><path d="M21 584 V593 L15.8 588.5 Z"/>
      <path d="M35.4 584 V593 L29.8 588.5 Z"/>
      <path d="M44 584 V593 L49.6 588.5 Z"/>
      <path d="M58.6 584 V593 L63.8 588.5 Z"/><rect x="63.8" y="584" width="1.6" height="9"/>
    </g>
    <!-- model tab -->
    <path d="M71.3 579.6 H122.3 L117.6 596 H75.6 Z" fill="#212830"/>
    <!-- layout tabs -->
    <path d="M119.4 596 L124 580.6 H233 L227.6 596 Z" fill="#fbfbfb" stroke="#555" stroke-width="0.9"/>
    <path d="M173.2 596 L178 580.6" stroke="#555" stroke-width="0.9"/>
    <path d="M117.6 596 L122.3 579.6" stroke="#212830" stroke-width="1"/>
  </svg>
</div>
</body>
</html>
